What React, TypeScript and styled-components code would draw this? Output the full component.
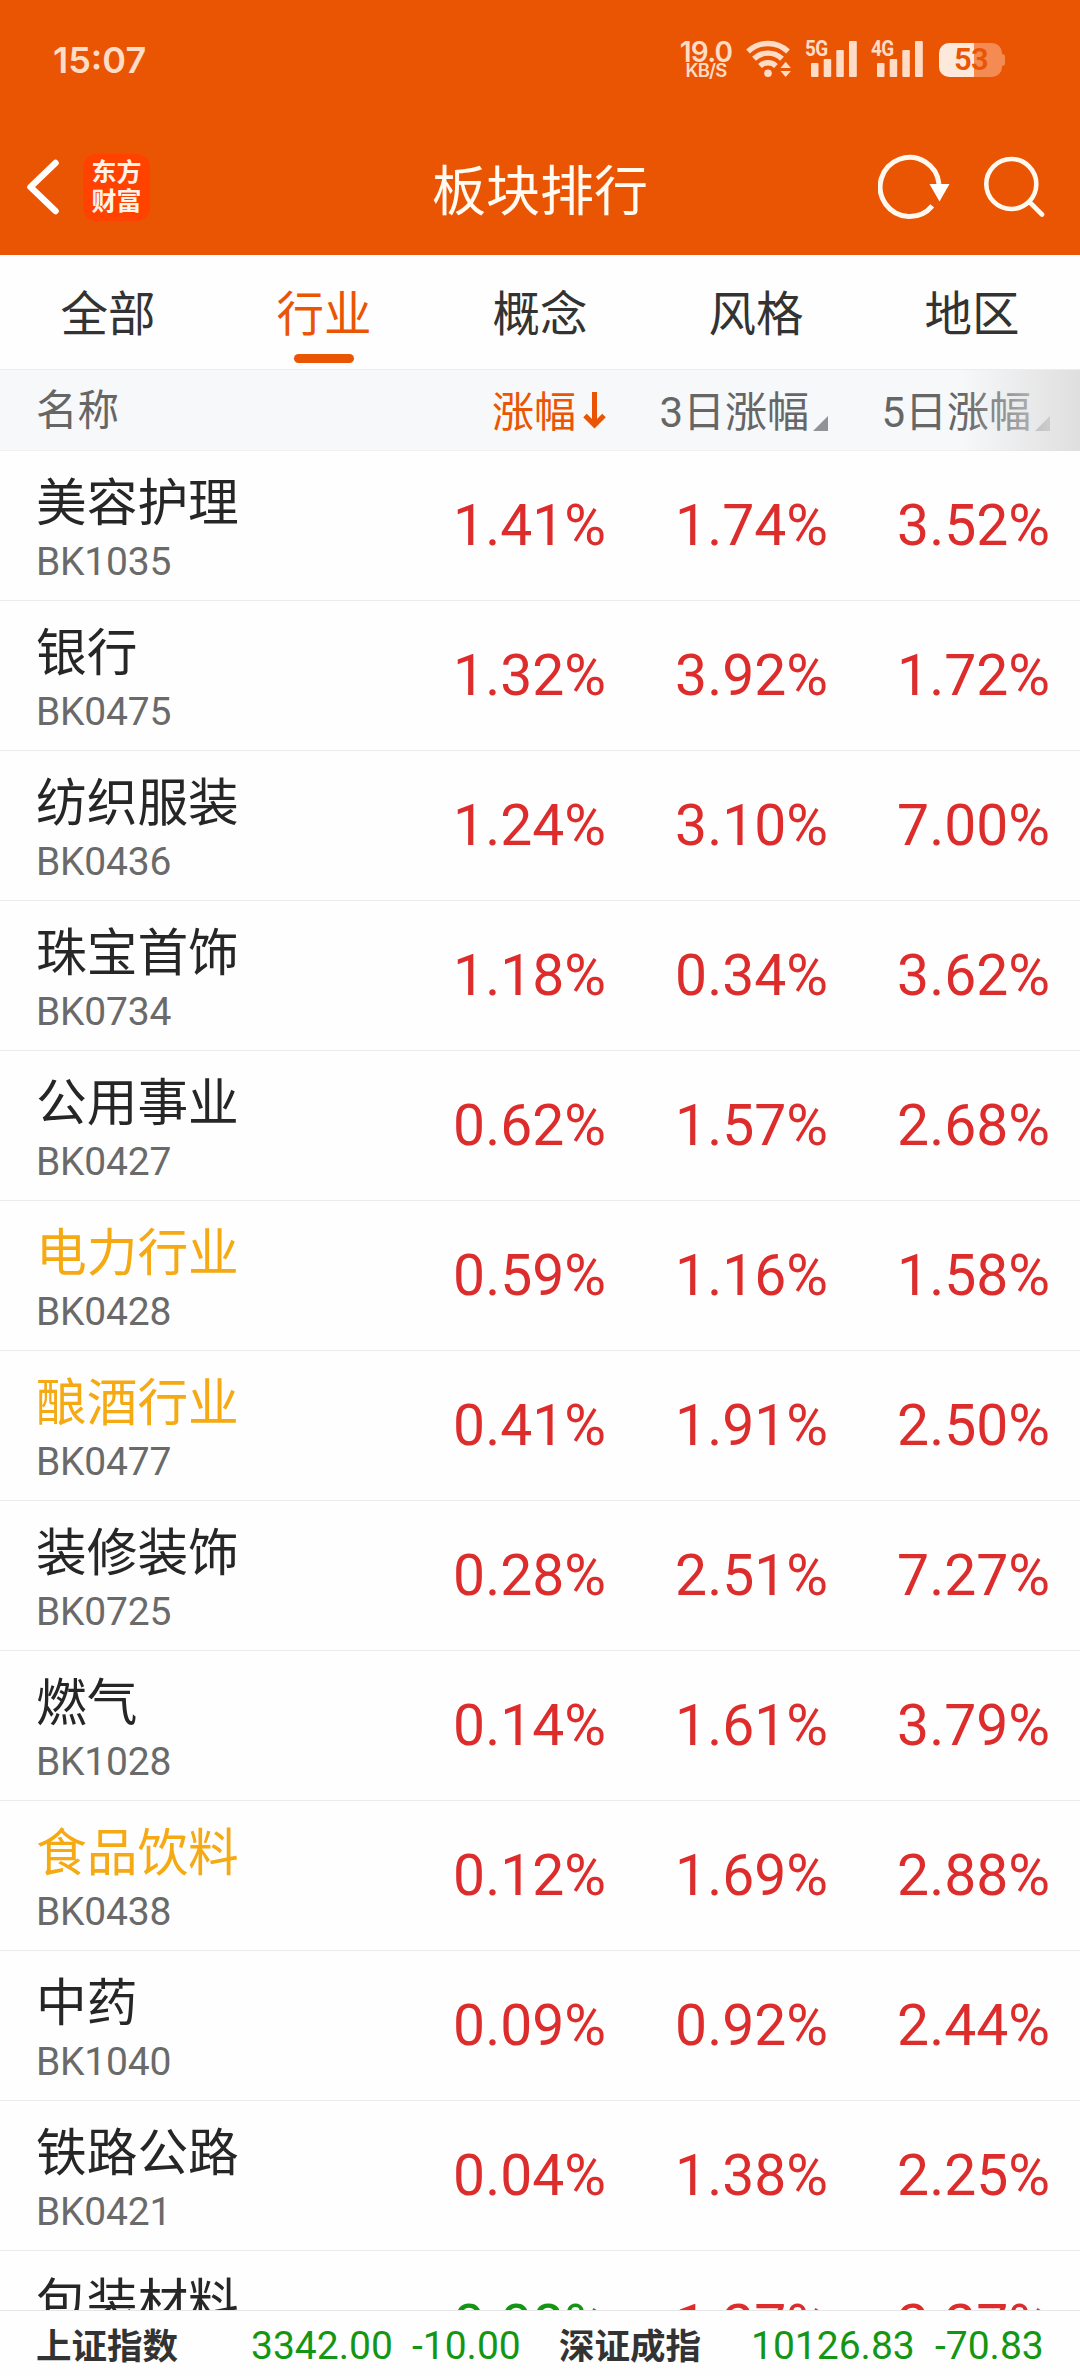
import React from "react";
import styled, { createGlobalStyle } from "styled-components";

const BRAND = "#ea5504";
const STATUS = "#ffdcc6";
const CJK = '"Noto Sans CJK SC", sans-serif';
const LATIN = 'Roboto, "Noto Sans CJK SC", sans-serif';

const GlobalStyle = createGlobalStyle`
  * { box-sizing: border-box; }
  body { margin: 0; background: #fff; }
`;

const Screen = styled.main`
  display: flex;
  flex-direction: column;
  width: 1080px;
  height: 2376px;
  overflow: hidden;
  background: #fefefe;
  font-family: ${CJK};
`;

const TopArea = styled.header`
  flex: none;
  height: 255px;
  background: ${BRAND};
  color: #fffaf2;
`;

const StatusBar = styled.div`
  display: flex;
  justify-content: space-between;
  align-items: flex-start;
  height: 119px;
  padding: 40px 75px 0 53px;
  color: ${STATUS};
`;

const Clock = styled.time`
  font: 600 36px/40px Inter, sans-serif;
  letter-spacing: 0;
`;

const StatusIcons = styled.div`
  display: flex;
  align-items: flex-start;
`;

const NetSpeed = styled.div`
  display: flex;
  flex-direction: column;
  align-items: center;
  width: 52px;
  margin-right: 14px;
  padding-top: 1px;
  font-family: Inter, sans-serif;
  font-weight: 600;
`;

const SpeedValue = styled.span`
  font-size: 28px;
  line-height: 22px;
  letter-spacing: -0.8px;
`;

const SpeedUnit = styled.span`
  font-size: 18.5px;
  line-height: 15px;
  letter-spacing: -0.8px;
`;

const SignalGroup = styled.div`
  display: flex;
  align-items: flex-start;
  width: 52px;
  height: 37px;
  margin-left: 14px;
`;

const SignalLabel = styled.span`
  width: 0;
  white-space: nowrap;
  font: 700 21.5px/17px "Roboto", sans-serif;
  letter-spacing: -0.6px;
  transform: scaleX(0.88);
  transform-origin: left;
`;

const Battery = styled.div`
  position: relative;
  display: flex;
  align-items: center;
  justify-content: center;
  width: 63px;
  height: 34px;
  margin: 3px 3px 0 16px;
  padding-left: 1px;
  border-radius: 10px;
  background: linear-gradient(90deg, #fde8dc 35px, #f48b52 35px);
  color: ${BRAND};
  font: 600 31px/34px "Roboto", sans-serif;
  letter-spacing: -0.6px;

  &::after {
    content: "";
    position: absolute;
    right: -3px;
    top: 11px;
    width: 3px;
    height: 12px;
    border-radius: 0 3px 3px 0;
    background: #f48b52;
  }
`;

const NavBar = styled.div`
  display: grid;
  grid-template-columns: 1fr 216px 1fr;
  align-items: center;
  height: 136px;
`;

const NavLeft = styled.div`
  display: flex;
  align-items: center;
  gap: 24px;
  padding-left: 26px;
`;

const NavRight = styled.div`
  display: flex;
  align-items: center;
  justify-content: flex-end;
  gap: 34px;
  padding-right: 35px;
`;

const AppLogo = styled.div`
  display: flex;
  flex-direction: column;
  align-items: center;
  width: 67px;
  height: 67px;
  padding-top: 2px;
  border-radius: 13px;
  background: #ff4200;
  color: #fff3e8;
  font: 700 25px/29.5px ${CJK};
`;

const Title = styled.h1`
  margin: 0;
  padding-top: 2px;
  font-size: 54px;
  font-weight: 400;
  line-height: 60px;
  white-space: nowrap;
`;

const Tabs = styled.nav`
  flex: none;
  display: grid;
  grid-template-columns: repeat(5, 1fr);
  height: 115px;
  border-bottom: 1px solid #ececec;
`;

const Tab = styled.div<{ $active?: boolean }>`
  display: flex;
  flex-direction: column;
  align-items: center;
  justify-content: space-between;
  padding: 24px 0 6px;
  color: ${(p) => (p.$active ? BRAND : "#333")};
  font-size: 47.5px;
  line-height: 64px;

  &::after {
    content: "";
    width: 60px;
    height: 9px;
    border-radius: 5px;
    background: ${(p) => (p.$active ? BRAND : "transparent")};
  }
`;

const gridColumns = "384px 222px 222px 222px";

const TableHead = styled.div`
  position: relative;
  flex: none;
  display: grid;
  grid-template-columns: ${gridColumns};
  align-items: center;
  height: 81px;
  border-bottom: 1px solid #f0f1f3;
  background: #f7f8fa;
  color: #666;
`;

const HeadName = styled.div`
  padding: 0 0 6px 36px;
  font-size: 41.5px;
  line-height: 60px;
`;

const HeadCell = styled.div<{ $active?: boolean }>`
  display: flex;
  align-items: center;
  justify-content: flex-end;
  gap: ${(p) => (p.$active ? "7px" : "4px")};
  white-space: nowrap;
  font: 400 42px/60px ${LATIN};
  color: ${(p) => (p.$active ? BRAND : "#666")};
`;

const HeadLabel = styled.span`
  padding-top: 5px;
`;

const SortCorner = styled.i`
  width: 15px;
  height: 15px;
  margin-top: 27px;
  background: #929297;
  clip-path: polygon(100% 0, 100% 100%, 0 100%);
`;

const EdgeFade = styled.div`
  position: absolute;
  top: 0;
  right: 0;
  bottom: -1px;
  width: 120px;
  background: linear-gradient(90deg, rgba(224, 224, 224, 0), #dfdfdf);
`;

const Rows = styled.section`
  flex: 1;
  min-height: 0;
  overflow: hidden;
`;

const Row = styled.article`
  display: grid;
  grid-template-columns: ${gridColumns};
  align-items: center;
  height: 150px;
  border-bottom: 1px solid #ebebeb;
`;

const NameCell = styled.div`
  display: flex;
  flex-direction: column;
  gap: 6px;
  padding: 2px 0 0 36px;
`;

const SectorName = styled.span<{ $held?: boolean }>`
  color: ${(p) => (p.$held ? "#f5a912" : "#262626")};
  font-size: 50.7px;
  line-height: 64px;
`;

const SectorCode = styled.span`
  color: #6a6a6a;
  font: 400 39px/50px ${LATIN};
  letter-spacing: -0.2px;
`;

const Change = styled.span<{ $down?: boolean }>`
  text-align: right;
  color: ${(p) => (p.$down ? "#149614" : "#dc2c2c")};
  font: 400 57px/70px ${LATIN};
`;

const IndexBar = styled.footer`
  flex: none;
  display: grid;
  grid-template-columns: 215px 161px 147px 192px 184px 1fr;
  align-items: center;
  height: 66px;
  padding-left: 36px;
  border-top: 1px solid #e6e6e6;
  background: #fefefe;
`;

const IndexName = styled.span`
  color: #333;
  font-size: 35.5px;
  font-weight: 700;
  line-height: 60px;
`;

const IndexFigure = styled.span`
  padding-top: 4px;
  white-space: nowrap;
  color: #149614;
  font: 400 39px/60px ${LATIN};
`;

type Sector = { name: string; code: string; values: string[]; held?: boolean };

const sectors: Sector[] = [
  { name: "美容护理", code: "BK1035", values: ["1.41%", "1.74%", "3.52%"] },
  { name: "银行", code: "BK0475", values: ["1.32%", "3.92%", "1.72%"] },
  { name: "纺织服装", code: "BK0436", values: ["1.24%", "3.10%", "7.00%"] },
  { name: "珠宝首饰", code: "BK0734", values: ["1.18%", "0.34%", "3.62%"] },
  { name: "公用事业", code: "BK0427", values: ["0.62%", "1.57%", "2.68%"] },
  { name: "电力行业", code: "BK0428", values: ["0.59%", "1.16%", "1.58%"], held: true },
  { name: "酿酒行业", code: "BK0477", values: ["0.41%", "1.91%", "2.50%"], held: true },
  { name: "装修装饰", code: "BK0725", values: ["0.28%", "2.51%", "7.27%"] },
  { name: "燃气", code: "BK1028", values: ["0.14%", "1.61%", "3.79%"] },
  { name: "食品饮料", code: "BK0438", values: ["0.12%", "1.69%", "2.88%"], held: true },
  { name: "中药", code: "BK1040", values: ["0.09%", "0.92%", "2.44%"] },
  { name: "铁路公路", code: "BK0421", values: ["0.04%", "1.38%", "2.25%"] },
  { name: "包装材料", code: "BK0468", values: ["-0.08%", "1.27%", "2.27%"] },
];

const tabs = ["全部", "行业", "概念", "风格", "地区"];

const WifiIcon = () => (
  <svg width="45" height="37" viewBox="0 0 45 37" fill="none" stroke={STATUS} strokeWidth="5.4">
    <path d="M2 11.5A29 29 0 0 1 42 11.5" />
    <path d="M8 18.8A20 20 0 0 1 36 18.8" />
    <path d="M14 26A11.5 11.5 0 0 1 30 26" />
    <circle cx="22" cy="33.2" r="3.8" fill={STATUS} stroke="none" />
    <path d="M34.5 28l5.2-6.2 5.2 6.2zM34.5 31h10.4l-5.2 6z" fill={STATUS} stroke="none" />
  </svg>
);

const Signal = ({ label }: { label: string }) => (
  <SignalGroup>
    <SignalLabel>{label}</SignalLabel>
    <svg width="52" height="37" viewBox="0 0 52 37" fill={STATUS}>
      <rect x="6" y="23" width="7.5" height="14" rx="1" />
      <rect x="18.7" y="19" width="7.5" height="18" rx="1" />
      <rect x="31.3" y="10" width="7.5" height="27" rx="1" />
      <rect x="44" y="1" width="7.8" height="36" rx="1" />
    </svg>
  </SignalGroup>
);

const BackIcon = () => (
  <svg width="33" height="56" viewBox="0 0 33 56" fill="none" stroke="#fff" strokeWidth="6.5" strokeLinecap="round">
    <path d="M29.5 4L4.5 28L29.5 52" strokeLinejoin="round" />
  </svg>
);

const RefreshIcon = () => (
  <svg width="72" height="66" viewBox="0 0 72 66" fill="none" stroke="#fff8ef" strokeWidth="5">
    <path d="M61 30A29.5 29.5 0 1 0 54.3 51.8" />
    <path d="M51.5 30h20l-10 17.5z" fill="#fff" stroke="none" />
  </svg>
);

const SearchIcon = () => (
  <svg width="61" height="62" viewBox="0 0 61 62" fill="none" stroke="#fff8ef" strokeWidth="4.6" strokeLinecap="round">
    <circle cx="27.3" cy="28" r="25" />
    <path d="M45.5 46L58 58.5" />
  </svg>
);

const SortDown = () => (
  <svg width="23" height="38" viewBox="0 0 23 38" fill="none" stroke={BRAND} strokeWidth="5">
    <path d="M11.5 1V34M2 24.5L11.5 34L21 24.5" />
  </svg>
);

export default function App() {
  return (
    <Screen>
      <GlobalStyle />
      <TopArea>
        <StatusBar>
          <Clock>15:07</Clock>
          <StatusIcons>
            <NetSpeed>
              <SpeedValue>19.0</SpeedValue>
              <SpeedUnit>KB/S</SpeedUnit>
            </NetSpeed>
            <WifiIcon />
            <Signal label="5G" />
            <Signal label="4G" />
            <Battery>53</Battery>
          </StatusIcons>
        </StatusBar>
        <NavBar>
          <NavLeft>
            <BackIcon />
            <AppLogo>
              <span>东方</span>
              <span>财富</span>
            </AppLogo>
          </NavLeft>
          <Title>板块排行</Title>
          <NavRight>
            <RefreshIcon />
            <SearchIcon />
          </NavRight>
        </NavBar>
      </TopArea>
      <Tabs>
        {tabs.map((tab) => (
          <Tab key={tab} $active={tab === "行业"}>
            {tab}
          </Tab>
        ))}
      </Tabs>
      <TableHead>
        <HeadName>名称</HeadName>
        <HeadCell $active>
          <HeadLabel>涨幅</HeadLabel>
          <SortDown />
        </HeadCell>
        <HeadCell>
          <HeadLabel>3日涨幅</HeadLabel>
          <SortCorner />
        </HeadCell>
        <HeadCell>
          <HeadLabel>5日涨幅</HeadLabel>
          <SortCorner />
        </HeadCell>
        <EdgeFade />
      </TableHead>
      <Rows>
        {sectors.map((s) => (
          <Row key={s.name}>
            <NameCell>
              <SectorName $held={s.held}>{s.name}</SectorName>
              <SectorCode>{s.code}</SectorCode>
            </NameCell>
            {s.values.map((v, i) => (
              <Change key={i} $down={v.startsWith("-")}>
                {v.replace("-", "")}
              </Change>
            ))}
          </Row>
        ))}
      </Rows>
      <IndexBar>
        <IndexName>上证指数</IndexName>
        <IndexFigure>3342.00</IndexFigure>
        <IndexFigure>-10.00</IndexFigure>
        <IndexName>深证成指</IndexName>
        <IndexFigure>10126.83</IndexFigure>
        <IndexFigure>-70.83</IndexFigure>
      </IndexBar>
    </Screen>
  );
}
